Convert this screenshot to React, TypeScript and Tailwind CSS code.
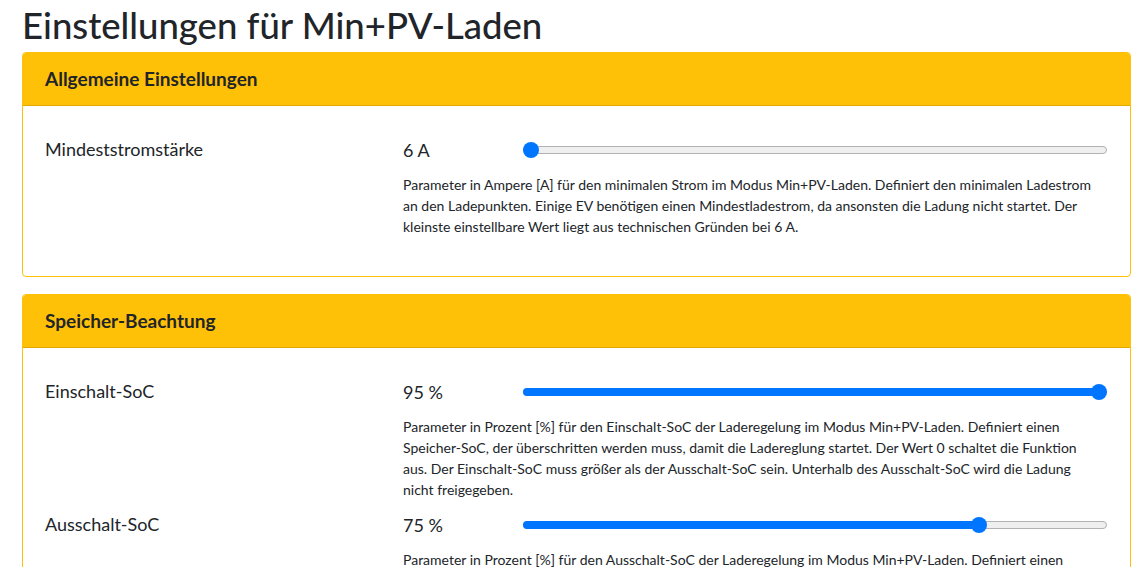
import React from "react";

type Setting = {
  label: string;
  value: string;
  min: number;
  max: number;
  current: number;
  help: string;
};

const sections: { title: string; settings: Setting[] }[] = [
  {
    title: "Allgemeine Einstellungen",
    settings: [
      {
        label: "Mindeststromstärke",
        value: "6 A",
        min: 6,
        max: 32,
        current: 6,
        help: "Parameter in Ampere [A] für den minimalen Strom im Modus Min+PV-Laden. Definiert den minimalen Ladestrom an den Ladepunkten. Einige EV benötigen einen Mindestladestrom, da ansonsten die Ladung nicht startet. Der kleinste einstellbare Wert liegt aus technischen Gründen bei 6 A.",
      },
    ],
  },
  {
    title: "Speicher-Beachtung",
    settings: [
      {
        label: "Einschalt-SoC",
        value: "95 %",
        min: 0,
        max: 95,
        current: 95,
        help: "Parameter in Prozent [%] für den Einschalt-SoC der Laderegelung im Modus Min+PV-Laden. Definiert einen Speicher-SoC, der überschritten werden muss, damit die Ladereglung startet. Der Wert 0 schaltet die Funktion aus. Der Einschalt-SoC muss größer als der Ausschalt-SoC sein. Unterhalb des Ausschalt-SoC wird die Ladung nicht freigegeben.",
      },
      {
        label: "Ausschalt-SoC",
        value: "75 %",
        min: 0,
        max: 95,
        current: 75,
        help: "Parameter in Prozent [%] für den Ausschalt-SoC der Laderegelung im Modus Min+PV-Laden. Definiert einen Speicher-SoC, der unterschritten werden muss, damit die Ladereglung stoppt.",
      },
    ],
  },
];

function Slider({ min, max, current }: { min: number; max: number; current: number }) {
  const pct = ((current - min) / (max - min)) * 100;
  return (
    <div className="relative h-4 flex-1 flex items-center">
      <div className="absolute inset-x-0 h-[8px] rounded-full bg-[#efefef] border border-[#b2b2b2]" />
      <div
        className="absolute left-0 h-[8px] rounded-full bg-[#0075ff]"
        style={{ width: `calc(${pct}% - ${pct / 100 * 16}px + 8px)`, display: pct > 0 ? "block" : "none" }}
      />
      <div
        className="absolute h-4 w-4 rounded-full bg-[#0075ff]"
        style={{ left: `calc(${pct}% - ${pct / 100 * 16}px)` }}
      />
    </div>
  );
}

export default function App() {
  return (
    <div className="min-h-screen bg-white pl-[22px] pr-[15px] text-[#212529] font-['Lato','Liberation_Sans',sans-serif]">
      <h1 className="text-[36.5px] font-medium leading-[46px] pt-[2px] mb-1">Einstellungen für Min+PV-Laden</h1>

      {sections.map((section) => (
        <div key={section.title} className="mb-[17px] rounded border border-[#ffc107] bg-white">
          <div className="h-[53px] flex items-center px-[22px] bg-[#ffc107] border-b border-[#e0a800] rounded-t-[3px]">
            <h3 className="text-[19px] font-bold">{section.title}</h3>
          </div>
          <div className="pl-[22px] pr-[23px] pt-[30px] pb-[39px] flex flex-col gap-[11px]">
            {section.settings.map((s) => (
              <div key={s.label} className="flex">
                <div className="w-[358px] text-lg leading-[27px]">{s.label}</div>
                <div className="flex-1">
                  <div className="flex items-center h-[27px]">
                    <span className="w-[120px] text-lg">{s.value}</span>
                    <Slider min={s.min} max={s.max} current={s.current} />
                  </div>
                  <p className="mt-[11px] pr-[7px] text-sm leading-[21px]">{s.help}</p>
                </div>
              </div>
            ))}
          </div>
        </div>
      ))}
    </div>
  );
}
